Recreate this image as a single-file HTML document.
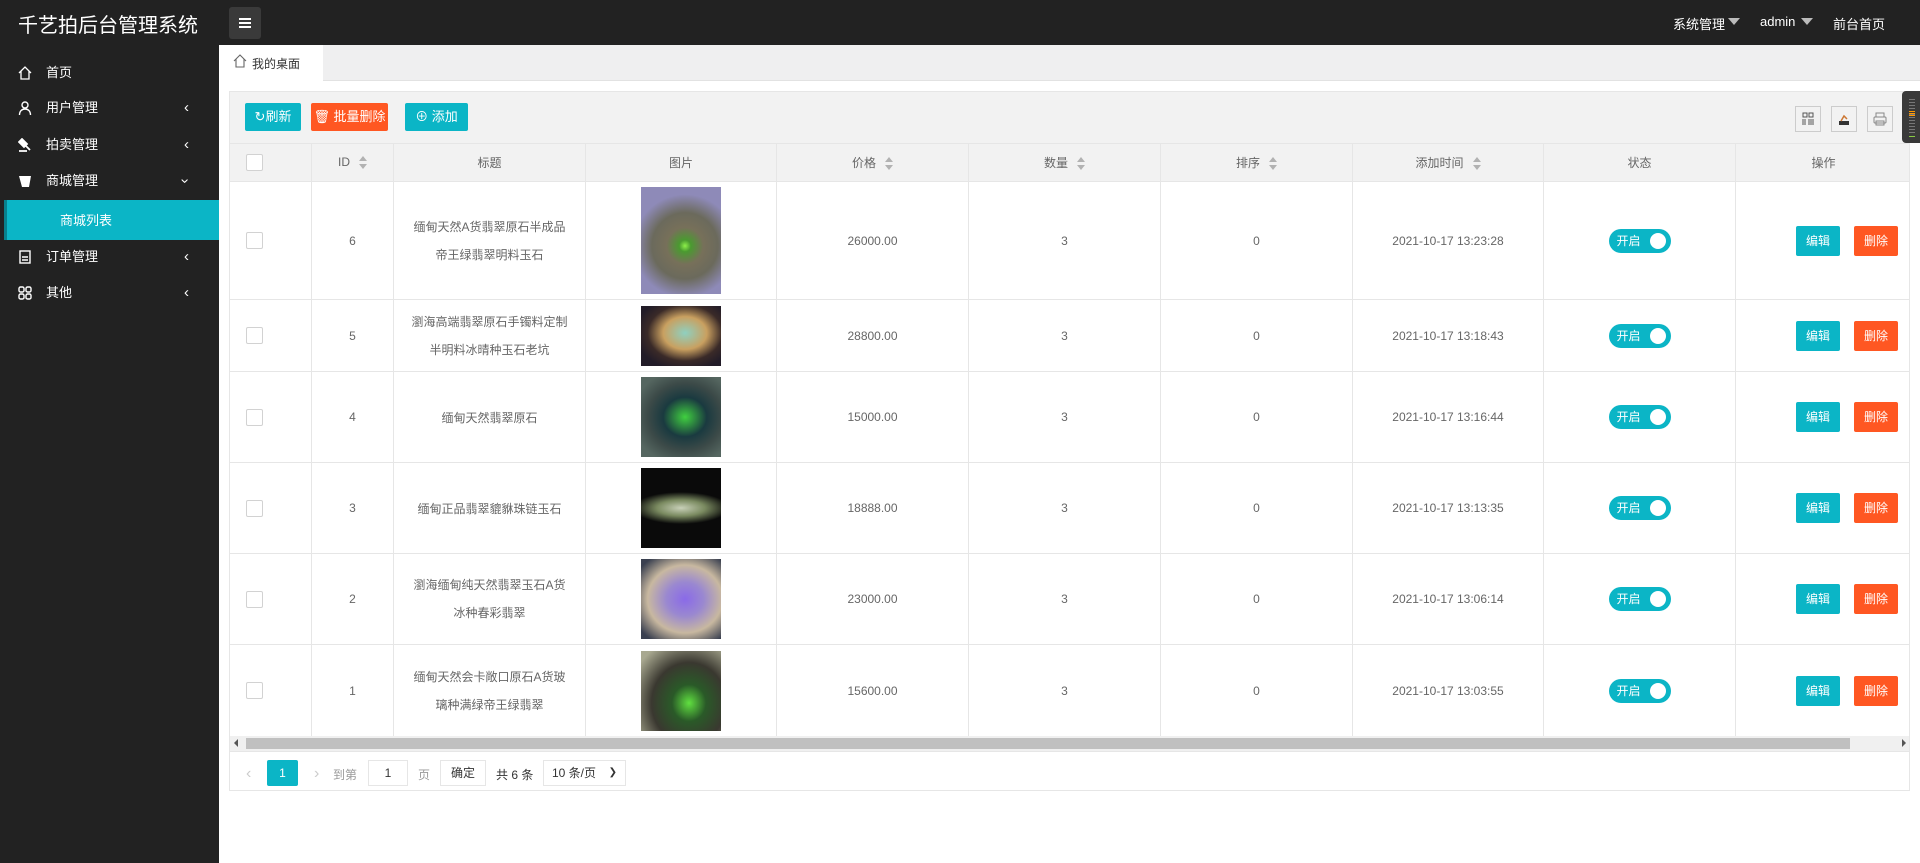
<!DOCTYPE html>
<html><head><meta charset="utf-8"><style>
*{margin:0;padding:0;box-sizing:border-box}
body{width:1920px;height:863px;overflow:hidden;background:#fff;font-family:"Liberation Sans","Noto Sans CJK SC",sans-serif;font-size:12px;color:#666;position:relative}
.a{position:absolute}
#hd{left:0;top:0;width:1920px;height:45px;background:#222}
#sb{left:0;top:45px;width:219px;height:818px;background:#222}
.mi{position:absolute;left:0;width:219px;height:36px;line-height:36px;color:#fff;font-size:13px}
.mi .t{position:absolute;left:46px}
.mi .ic{position:absolute;left:18px;top:11px;width:14px;height:14px}
.mi .ar{position:absolute;left:184px;top:0;color:#fff;font-size:15px}
.btn{position:absolute;height:28px;line-height:28px;color:#fff;font-size:13px;text-align:center;border-radius:2px}
.teal{background:#0bb5c6}.org{background:#ff5722}
table{border-collapse:collapse;table-layout:fixed}
td,th{border:1px solid #e6e6e6;text-align:center;font-weight:normal;color:#666;font-size:12px}
th{background:#f2f2f2;height:38px}
td:first-child,th:first-child{text-align:left;padding-left:16px}
td:last-child{text-align:left;padding-left:60px}
.cb{display:inline-block;width:17px;height:17px;border:1px solid #d2d2d2;background:#fff;border-radius:2px;vertical-align:middle}
.sort{display:inline-block;width:8px;height:14px;vertical-align:middle;margin-left:9px;position:relative}
.sort:before{content:"";position:absolute;left:0;top:0;border:4px solid transparent;border-bottom:5px solid #b2b2b2;border-top:0}
.sort:after{content:"";position:absolute;left:0;top:8px;border:4px solid transparent;border-top:5px solid #b2b2b2;border-bottom:0}
.tg{display:inline-block;position:relative;width:62px;height:24px;border-radius:12px;background:#0bb5c6;color:#fff;text-align:left;padding-left:8px;line-height:24px;font-size:12px}
.tg:after{content:"";position:absolute;right:5px;top:4px;width:16px;height:16px;border-radius:50%;background:#fff}
.ob{display:inline-block;width:44px;height:30px;line-height:30px;color:#fff;border-radius:2px;font-size:12px;text-align:center}
.ob.org{margin-left:14px}
.img{display:inline-block;width:80px;vertical-align:middle}
.tl{line-height:28px}
.ti{position:absolute;top:106px;width:26px;height:26px;border:1px solid #ccc}
</style></head><body>
<div id="hd" class="a">
 <div class="a" style="left:18px;top:9px;color:#fff;font-size:20px;">千艺拍后台管理系统</div>
 <div class="a" style="left:229px;top:7px;width:32px;height:32px;background:#3a3a3a;border-radius:3px">
  <div class="a" style="left:10px;top:11px;width:12px;height:2px;background:#fff"></div>
  <div class="a" style="left:10px;top:15px;width:12px;height:2px;background:#fff"></div>
  <div class="a" style="left:10px;top:19px;width:12px;height:2px;background:#fff"></div>
 </div>
 <div class="a" style="left:1673px;top:14px;color:#fff;font-size:13px">系统管理</div>
 <div class="a" style="left:1728px;top:18px;border:6px solid transparent;border-top:7px solid #bbb;border-bottom:0"></div>
 <div class="a" style="left:1760px;top:14px;color:#fff;font-size:13px">admin</div>
 <div class="a" style="left:1801px;top:18px;border:6px solid transparent;border-top:7px solid #bbb;border-bottom:0"></div>
 <div class="a" style="left:1833px;top:14px;color:#fff;font-size:13px">前台首页</div>
</div>
<div id="sb" class="a">
 <div class="mi" style="top:10px"><svg class="ic" viewBox="0 0 14 14"><path d="M1 7L7 1l6 6M3 5v8h8V5" fill="none" stroke="#fff" stroke-width="1.3"/></svg><span class="t">首页</span></div>
 <div class="mi" style="top:45px"><svg class="ic" viewBox="0 0 14 14"><circle cx="7" cy="4" r="3" fill="none" stroke="#fff" stroke-width="1.4"/><path d="M1.5 14c0-4 2.5-6 5.5-6s5.5 2 5.5 6" fill="none" stroke="#fff" stroke-width="1.4"/></svg><span class="t">用户管理</span><span class="ar">&#8249;</span></div>
 <div class="mi" style="top:82px"><svg class="ic" viewBox="0 0 14 14"><path d="M4 1l5 5-3 3-5-5zM7 7l5 5M1 13h8" stroke="#fff" stroke-width="1.8" fill="#fff"/></svg><span class="t">拍卖管理</span><span class="ar">&#8249;</span></div>
 <div class="mi" style="top:118px"><svg class="ic" viewBox="0 0 14 14"><path d="M1 2h12l-2 11H4z" fill="#fff"/></svg><span class="t">商城管理</span><span class="ar" style="left:182px;transform:rotate(-90deg)">&#8249;</span></div>
 <div class="a" style="left:4px;top:155px;width:215px;height:40px;background:#0bb5c6;border-left:3px solid #08808c"></div>
 <div class="a" style="left:60px;top:165px;color:#fff;font-size:13px">商城列表</div>
 <div class="mi" style="top:194px"><svg class="ic" viewBox="0 0 14 14"><rect x="2" y="1" width="10" height="12" fill="none" stroke="#fff" stroke-width="1.4"/><path d="M4 7h6M4 10h6" stroke="#fff" stroke-width="1.4"/></svg><span class="t">订单管理</span><span class="ar">&#8249;</span></div>
 <div class="mi" style="top:230px"><svg class="ic" viewBox="0 0 14 14"><g fill="none" stroke="#fff" stroke-width="1.4"><rect x="1" y="1" width="5" height="5" rx="1.5"/><rect x="8" y="1" width="5" height="5" rx="1.5"/><rect x="1" y="8" width="5" height="5" rx="1.5"/><rect x="8" y="8" width="5" height="5" rx="1.5"/></g></svg><span class="t">其他</span><span class="ar">&#8249;</span></div>
</div>
<div class="a" style="left:219px;top:45px;width:1701px;height:36px;background:#efeff0;border-bottom:1px solid #e2e2e2"></div>
<div class="a" style="left:219px;top:45px;width:104px;height:36px;background:#fff"></div>
<svg class="a" style="left:233px;top:54px" width="14" height="14" viewBox="0 0 14 14"><path d="M1 7L7 1l6 6M3 5v8h8V5" fill="none" stroke="#666" stroke-width="1.1"/></svg>
<div class="a" style="left:252px;top:55px;color:#333;font-size:12px">我的桌面</div>

<div class="a" style="left:229px;top:91px;width:1681px;height:700px;border:1px solid #e6e6e6;overflow:hidden">
 <div class="a" style="left:0;top:0;width:1681px;height:52px;background:#f2f2f2"></div>
 <div class="btn teal" style="left:15px;top:11px;width:56px">&#8635;刷新</div>
 <div class="btn org" style="left:81px;top:11px;width:77px">&#128465; 批量删除</div>
 <div class="btn teal" style="left:175px;top:11px;width:63px">&#8853; 添加</div>
 <table class="a" style="left:-1px;top:51px;width:1682px">
  <colgroup><col style="width:82px"><col style="width:82px"><col style="width:192px"><col style="width:191px"><col style="width:192px"><col style="width:192px"><col style="width:192px"><col style="width:191px"><col style="width:192px"><col style="width:176px"></colgroup>
  <tr><th><span class="cb"></span></th><th>ID<span class="sort"></span></th><th>标题</th><th>图片</th><th>价格<span class="sort"></span></th><th>数量<span class="sort"></span></th><th>排序<span class="sort"></span></th><th>添加时间<span class="sort"></span></th><th>状态</th><th style="text-align:center">操作</th></tr>
  <tr style="height:118px"><td><span class="cb"></span></td><td>6</td><td class="tl">缅甸天然A货翡翠原石半成品<br>帝王绿翡翠明料玉石</td><td><span class="img" style="height:107px;background:radial-gradient(circle at 55% 55%,#8df04a 0,#4a9a30 8%,#77705a 25%,#6b6a5c 45%,#8e8ab8 70%)"></span></td><td>26000.00</td><td>3</td><td>0</td><td>2021-10-17 13:23:28</td><td><span class="tg">开启</span></td><td><span class="ob teal">编辑</span><span class="ob org">删除</span></td></tr>
  <tr style="height:72px"><td><span class="cb"></span></td><td>5</td><td class="tl">瀏海高端翡翠原石手镯料定制<br>半明料冰晴种玉石老坑</td><td><span class="img" style="height:60px;background:radial-gradient(ellipse at 55% 45%,#8fd0c0 0,#c9a060 35%,#3a2a28 60%,#221c28 80%)"></span></td><td>28800.00</td><td>3</td><td>0</td><td>2021-10-17 13:18:43</td><td><span class="tg">开启</span></td><td><span class="ob teal">编辑</span><span class="ob org">删除</span></td></tr>
  <tr style="height:91px"><td><span class="cb"></span></td><td>4</td><td>缅甸天然翡翠原石</td><td><span class="img" style="height:80px;background:radial-gradient(ellipse at 55% 50%,#40d040 0,#1a3a40 35%,#3c4a48 60%,#556660 85%)"></span></td><td>15000.00</td><td>3</td><td>0</td><td>2021-10-17 13:16:44</td><td><span class="tg">开启</span></td><td><span class="ob teal">编辑</span><span class="ob org">删除</span></td></tr>
  <tr style="height:91px"><td><span class="cb"></span></td><td>3</td><td>缅甸正品翡翠貔貅珠链玉石</td><td><span class="img" style="height:80px;background:radial-gradient(ellipse 60% 20% at 50% 50%,#c8d0b8 0,#7a8a60 50%,#0a0a0a 100%)"></span></td><td>18888.00</td><td>3</td><td>0</td><td>2021-10-17 13:13:35</td><td><span class="tg">开启</span></td><td><span class="ob teal">编辑</span><span class="ob org">删除</span></td></tr>
  <tr style="height:91px"><td><span class="cb"></span></td><td>2</td><td class="tl">瀏海缅甸纯天然翡翠玉石A货<br>冰种春彩翡翠</td><td><span class="img" style="height:80px;background:radial-gradient(ellipse at 55% 50%,#8a6ae8 0,#9a88d0 30%,#c8b8a0 60%,#3a4050 90%)"></span></td><td>23000.00</td><td>3</td><td>0</td><td>2021-10-17 13:06:14</td><td><span class="tg">开启</span></td><td><span class="ob teal">编辑</span><span class="ob org">删除</span></td></tr>
  <tr style="height:92px"><td><span class="cb"></span></td><td>1</td><td class="tl">缅甸天然会卡敞口原石A货玻<br>璃种满绿帝王绿翡翠</td><td><span class="img" style="height:80px;background:radial-gradient(ellipse at 60% 65%,#60e040 0,#2a5a28 25%,#3a3830 55%,#a8a890 90%)"></span></td><td>15600.00</td><td>3</td><td>0</td><td>2021-10-17 13:03:55</td><td><span class="tg">开启</span></td><td><span class="ob teal">编辑</span><span class="ob org">删除</span></td></tr>
 </table>
 <div class="a" style="left:0;top:644px;width:1681px;height:15px;background:#f0f0f0"></div>
 <div class="a" style="left:16px;top:646px;width:1604px;height:11px;background:#c0c0c0"></div>
 <div class="a" style="left:4px;top:647px;border:4px solid transparent;border-right:4px solid #555;border-left:0"></div>
 <div class="a" style="left:1672px;top:647px;border:4px solid transparent;border-left:4px solid #555;border-right:0"></div>
 <div class="a" style="left:0;top:659px;width:1681px;height:1px;background:#e6e6e6"></div>
 <div class="a" style="left:16px;top:673px;color:#ccc;font-size:16px">&#8249;</div>
 <div class="a" style="left:37px;top:668px;width:31px;height:26px;background:#0bb5c6;color:#fff;text-align:center;line-height:26px;border-radius:2px">1</div>
 <div class="a" style="left:84px;top:673px;color:#ccc;font-size:16px">&#8250;</div>
 <div class="a" style="left:103px;top:674px;color:#999">到第</div>
 <div class="a" style="left:138px;top:668px;width:40px;height:26px;border:1px solid #e6e6e6;text-align:center;line-height:24px;color:#333">1</div>
 <div class="a" style="left:188px;top:674px;color:#999">页</div>
 <div class="a" style="left:210px;top:668px;width:46px;height:26px;border:1px solid #e6e6e6;text-align:center;line-height:24px;color:#333">确定</div>
 <div class="a" style="left:266px;top:674px;color:#333">共 6 条</div>
 <div class="a" style="left:313px;top:668px;width:83px;height:26px;border:1px solid #e6e6e6;line-height:24px;color:#333;padding-left:8px">10 条/页<span style="position:absolute;right:8px;top:0;font-size:10px">&#10095;</span></div>
</div>
<div class="ti a" style="left:1795px"><svg width="24" height="24" viewBox="0 0 24 24"><g fill="none" stroke="#555"><rect x="7" y="6" width="4" height="4"/><rect x="13" y="6" width="4" height="4"/><path d="M7 12v6M9 12v6M13 12v6M15 12v6M17 12v6"/></g></svg></div>
<div class="ti a" style="left:1831px"><svg width="24" height="24" viewBox="0 0 24 24"><path d="M7 14h10v4H7z" fill="#333"/><path d="M9 14l3-5 3 3" fill="none" stroke="#c73" stroke-width="1.5"/></svg></div>
<div class="ti a" style="left:1867px"><svg width="24" height="24" viewBox="0 0 24 24"><g fill="none" stroke="#888"><rect x="6" y="10" width="12" height="6" rx="1"/><rect x="8" y="6" width="8" height="4"/><rect x="8" y="14" width="8" height="4"/></g></svg></div>
<div class="a" style="left:1902px;top:91px;width:18px;height:52px;background:#3a3a3a;border-radius:4px 0 0 4px">
 <div class="a" style="left:7px;top:8px;width:6px;height:36px;background:repeating-linear-gradient(#777 0 1px,transparent 1px 3px)"></div>
 <div class="a" style="left:7px;top:20px;width:6px;height:5px;background:repeating-linear-gradient(#f90 0 1px,transparent 1px 2px)"></div>
 <div class="a" style="left:7px;top:45px;width:6px;height:1px;background:#8c4"></div>
</div>
</body></html>
